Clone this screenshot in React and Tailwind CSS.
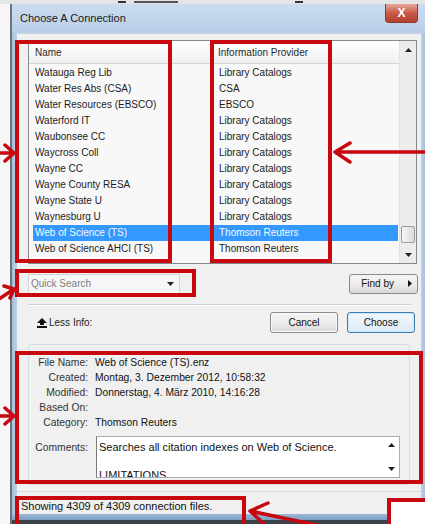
import React from "react";

const ROWS = [
  ["Watauga Reg Lib", "Library Catalogs"],
  ["Water Res Abs (CSA)", "CSA"],
  ["Water Resources (EBSCO)", "EBSCO"],
  ["Waterford IT", "Library Catalogs"],
  ["Waubonsee CC", "Library Catalogs"],
  ["Waycross Coll", "Library Catalogs"],
  ["Wayne CC", "Library Catalogs"],
  ["Wayne County RESA", "Library Catalogs"],
  ["Wayne State U", "Library Catalogs"],
  ["Waynesburg U", "Library Catalogs"],
  ["Web of Science (TS)", "Thomson Reuters", true],
  ["Web of Science AHCI (TS)", "Thomson Reuters"],
  ["Web of Science CPCI-S (TS)", "Thomson Reuters"],
];

const DETAILS = [
  ["File Name:", "Web of Science (TS).enz"],
  ["Created:", "Montag, 3. Dezember 2012, 10:58:32"],
  ["Modified:", "Donnerstag, 4. März 2010, 14:16:28"],
  ["Based On:", ""],
  ["Category:", "Thomson Reuters"],
];

function Tri({ dir }) {
  if (dir === "right") {
    return (
      <svg width="4" height="7" viewBox="0 0 4 7">
        <polygon points="0,0 4,3.5 0,7" fill="#111" />
      </svg>
    );
  }
  return (
    <svg width="7" height="4" viewBox="0 0 7 4">
      <polygon points={dir === "up" ? "0,4 3.5,0 7,4" : "0,0 3.5,4 7,0"} fill="#222" />
    </svg>
  );
}

function Button({ children, focus }) {
  return (
    <div
      className={
        focus
          ? "h-[21px] w-[68px] flex items-center justify-center gap-[10px] rounded-[3px] border border-[#3c7fb1] bg-gradient-to-b from-[#f3f9fd] to-[#dcebf6] shadow-[inset_0_0_0_1px_#c9e6f7] text-[10px] text-[#111]"
          : "h-[21px] w-[68px] flex items-center justify-center gap-[10px] rounded-[3px] border border-[#8a8a8a] bg-gradient-to-b from-[#f4f4f4] via-[#ececec] to-[#d9d9d9] shadow-[inset_0_0_0_1px_#fbfbfb] text-[10px] text-[#111]"
      }
    >
      {children}
    </div>
  );
}

function Annotations() {
  const red = "#c8070e";
  return (
    <svg
      className="absolute left-0 top-0 pointer-events-none"
      width="425"
      height="524"
      viewBox="0 0 425 524"
    >
      <g fill="none" stroke={red} strokeWidth="4" strokeLinejoin="miter">
        <rect x="17" y="42" width="153" height="219" />
        <rect x="212" y="42" width="118" height="219" />
        <rect x="17" y="271" width="177" height="24" />
        <rect x="17" y="353" width="404" height="129" />
        <rect x="17" y="498" width="227" height="32" />
        <rect x="389" y="500" width="40" height="30" fill="#ffffff" />
      </g>
      <g fill="none" stroke={red} strokeWidth="3.5" strokeLinecap="round" strokeLinejoin="round">
        {/* pointer to the name column */}
        <path d="M-6 153 L14 153 M5 145 L14 153 L5 161" />
        {/* pointer to the provider column */}
        <path d="M430 152 L335 152 M350 143 L335 152 L350 162" />
        {/* pointer to the quick search box */}
        <path d="M-4 301 L14 289 M4 286 L14 289 L10 298" />
        {/* pointer to the details panel */}
        <path d="M-6 416 L14 416 M5 408 L14 416 L5 424" />
        {/* pointer to the status line */}
        <path d="M340 530 L250 511 M268 503 L250 511 L264 524" />
      </g>
    </svg>
  );
}

export default function App() {
  return (
    <div className="relative w-[425px] h-[524px] overflow-hidden bg-[#f2f3f5] font-['Liberation_Sans',Arial,sans-serif] text-black">
      {/* strip of the window behind */}
      <div className="h-[4px] overflow-hidden bg-[#e4e5e7]">
        <div className="flex items-center h-[4px]">
          <span className="ml-[118px] w-[8px] h-[2px] bg-[#333]" />
          <span className="ml-[8px] w-[44px] h-[2px] bg-[#555]" />
          <span className="ml-[117px] w-[8px] h-[2px] bg-[#333]" />
        </div>
      </div>

      <div className="flex h-[520px]">
        <div className="w-[12px] bg-[#f6f6f6] border-r-2 border-[#6b7380]" />

        <div className="flex-1 flex flex-col">
          {/* title bar */}
          <div className="h-[29px] shrink-0 flex items-start justify-between bg-gradient-to-b from-[#cbdcef] via-[#c2d5eb] to-[#b9cfe8]">
            <div className="h-[28px] flex items-center pl-[8px] text-[11px] text-[#1a1a1a]">
              Choose A Connection
            </div>
            <div className="mr-[7px] w-[33px] h-[19px] flex items-center justify-center rounded-b-[4px] border border-t-0 border-[#8a3a30] bg-gradient-to-b from-[#e3a79b] via-[#c9594a] to-[#b4402f]">
              <span className="text-[12px] font-bold leading-none text-white">X</span>
            </div>
          </div>

          <div className="flex h-[481px] shrink-0">
            <div className="w-[5px] bg-gradient-to-r from-[#a8bfdb] to-[#bcd0e7]" />

            {/* client area */}
            <div className="w-[404px] flex flex-col bg-[#f0f0f0] border-t border-[#c7d3e0]">
              {/* connection list */}
              <div className="ml-[11px] mt-[6px] w-[389px] h-[224px] shrink-0 flex border border-[#828790] bg-white">
                <div className="flex-1 flex flex-col overflow-hidden">
                  <div className="h-[23px] shrink-0 flex items-center border-b border-[#d5d5d5] bg-gradient-to-b from-[#ffffff] to-[#eff0f2] text-[10px] text-[#2b2b2b]">
                    <div className="w-[184px] h-full flex items-center pl-[6px] border-r border-[#e3e4e6]">Name</div>
                    <div className="pl-[5px]">Information Provider</div>
                  </div>
                  <div className="pt-[1px] shrink-0 flex flex-col text-[10px] leading-[16px] bg-[#f8f8f8]">
                    {ROWS.map(([name, provider, sel]) => (
                      <div
                        key={name}
                        className={
                          sel
                            ? "ml-[4px] mr-[1px] h-[16px] shrink-0 flex bg-[#3399ff] text-[#f4faff]"
                            : "ml-[4px] mr-[1px] h-[16px] shrink-0 flex text-[#1c1c1c]"
                        }
                      >
                        <div className="w-[184px] pl-[2px] whitespace-nowrap">{name}</div>
                        <div className="pl-[2px] whitespace-nowrap">{provider}</div>
                      </div>
                    ))}
                  </div>
                </div>
                {/* vertical scrollbar */}
                <div className="w-[17px] flex flex-col bg-[#ececec] border-l border-[#e2e2e2]">
                  <div className="h-[17px] shrink-0 flex items-center justify-center">
                    <Tri dir="up" />
                  </div>
                  <div className="h-[168px] shrink-0" />
                  <div className="mx-[1px] h-[17px] shrink-0 rounded-[2px] border border-[#9a9a9a] bg-gradient-to-r from-[#f6f6f6] to-[#dcdcdc]" />
                  <div className="h-[3px] shrink-0" />
                  <div className="h-[17px] shrink-0 flex items-center justify-center">
                    <Tri dir="down" />
                  </div>
                </div>
              </div>

              {/* search row */}
              <div className="mt-[9px] h-[21px] shrink-0 flex items-center justify-between pl-[11px] pr-[3px]">
                <div className="w-[152px] h-[20px] flex items-center justify-between border border-[#d4d4d4] bg-[#f7f7f7] pl-[2px] pr-[5px] text-[10px] text-[#7d7d7d]">
                  <span>Quick Search</span>
                  <Tri dir="down" />
                </div>
                <div className="w-[69px] h-[20px] flex items-center justify-end gap-[14px] pr-[5px] rounded-[3px] border border-[#8a8a8a] bg-gradient-to-b from-[#f4f4f4] via-[#ececec] to-[#d9d9d9] text-[10px] text-[#111]">
                  <span>Find by</span>
                  <Tri dir="right" />
                </div>
              </div>

              {/* separator */}
              <div className="mt-[10px] ml-[11px] w-[383px] h-[2px] shrink-0 border-t border-[#d0d0d0] border-b border-b-[#ffffff]" />

              {/* less info + buttons */}
              <div className="mt-[6px] h-[21px] shrink-0 flex items-center pl-[20px] pr-[6px]">
                <div className="flex items-center gap-[2px] text-[10px] text-[#222]">
                  <svg width="10" height="10" viewBox="0 0 10 10">
                    <polygon points="0,5 5,0 10,5" fill="#111" />
                    <rect x="3" y="5" width="4" height="2" fill="#111" />
                    <rect x="0" y="8" width="10" height="2" fill="#111" />
                  </svg>
                  <span>Less Info:</span>
                </div>
                <div className="ml-auto flex gap-[9px]">
                  <Button>Cancel</Button>
                  <Button focus>Choose</Button>
                </div>
              </div>

              {/* details group */}
              <div className="mt-[11px] ml-[11px] w-[382px] h-[141px] shrink-0 rounded-[3px] border border-[#d5dde4] pt-[10px] flex flex-col text-[10.3px]">
                {DETAILS.map(([label, value]) => (
                  <div key={label} className="h-[15px] shrink-0 flex items-center">
                    <div className="w-[59px] text-right text-[#333]">{label}</div>
                    <div className="pl-[7px] text-[#111] whitespace-nowrap">{value}</div>
                  </div>
                ))}
                <div className="mt-[6px] flex">
                  <div className="w-[59px] pt-[4px] text-right text-[#333] leading-[15px]">Comments:</div>
                  <div className="ml-[8px] w-[304px] h-[42px] flex border border-[#abadb3] border-l-[#7a7a7a] bg-white">
                    <div className="flex-1 overflow-hidden pl-[2px] pt-[3px] text-[11px] leading-[14px] text-[#111]">
                      <div>Searches all citation indexes on Web of Science.</div>
                      <div className="h-[14px]" />
                      <div>LIMITATIONS</div>
                    </div>
                    <div className="w-[16px] flex flex-col justify-between py-[6px] items-center">
                      <Tri dir="up" />
                      <Tri dir="down" />
                    </div>
                  </div>
                </div>
              </div>

              {/* status line */}
              <div className="mt-[6px] h-[22px] shrink-0 border-t border-[#d9d9d9] pl-[4px] pt-[7px] text-[11px] leading-[14px] text-[#111]">
                Showing 4309 of 4309 connection files.
              </div>
            </div>

            <div className="w-[4px] bg-gradient-to-r from-[#bcd0e7] to-[#a8bfdb]" />
          </div>

          <div className="h-[6px] shrink-0 bg-gradient-to-b from-[#9db7d6] to-[#7e9ec6]" />
          <div className="h-[4px] shrink-0 bg-[#3d434b]" />
        </div>
      </div>

      <Annotations />
    </div>
  );
}
